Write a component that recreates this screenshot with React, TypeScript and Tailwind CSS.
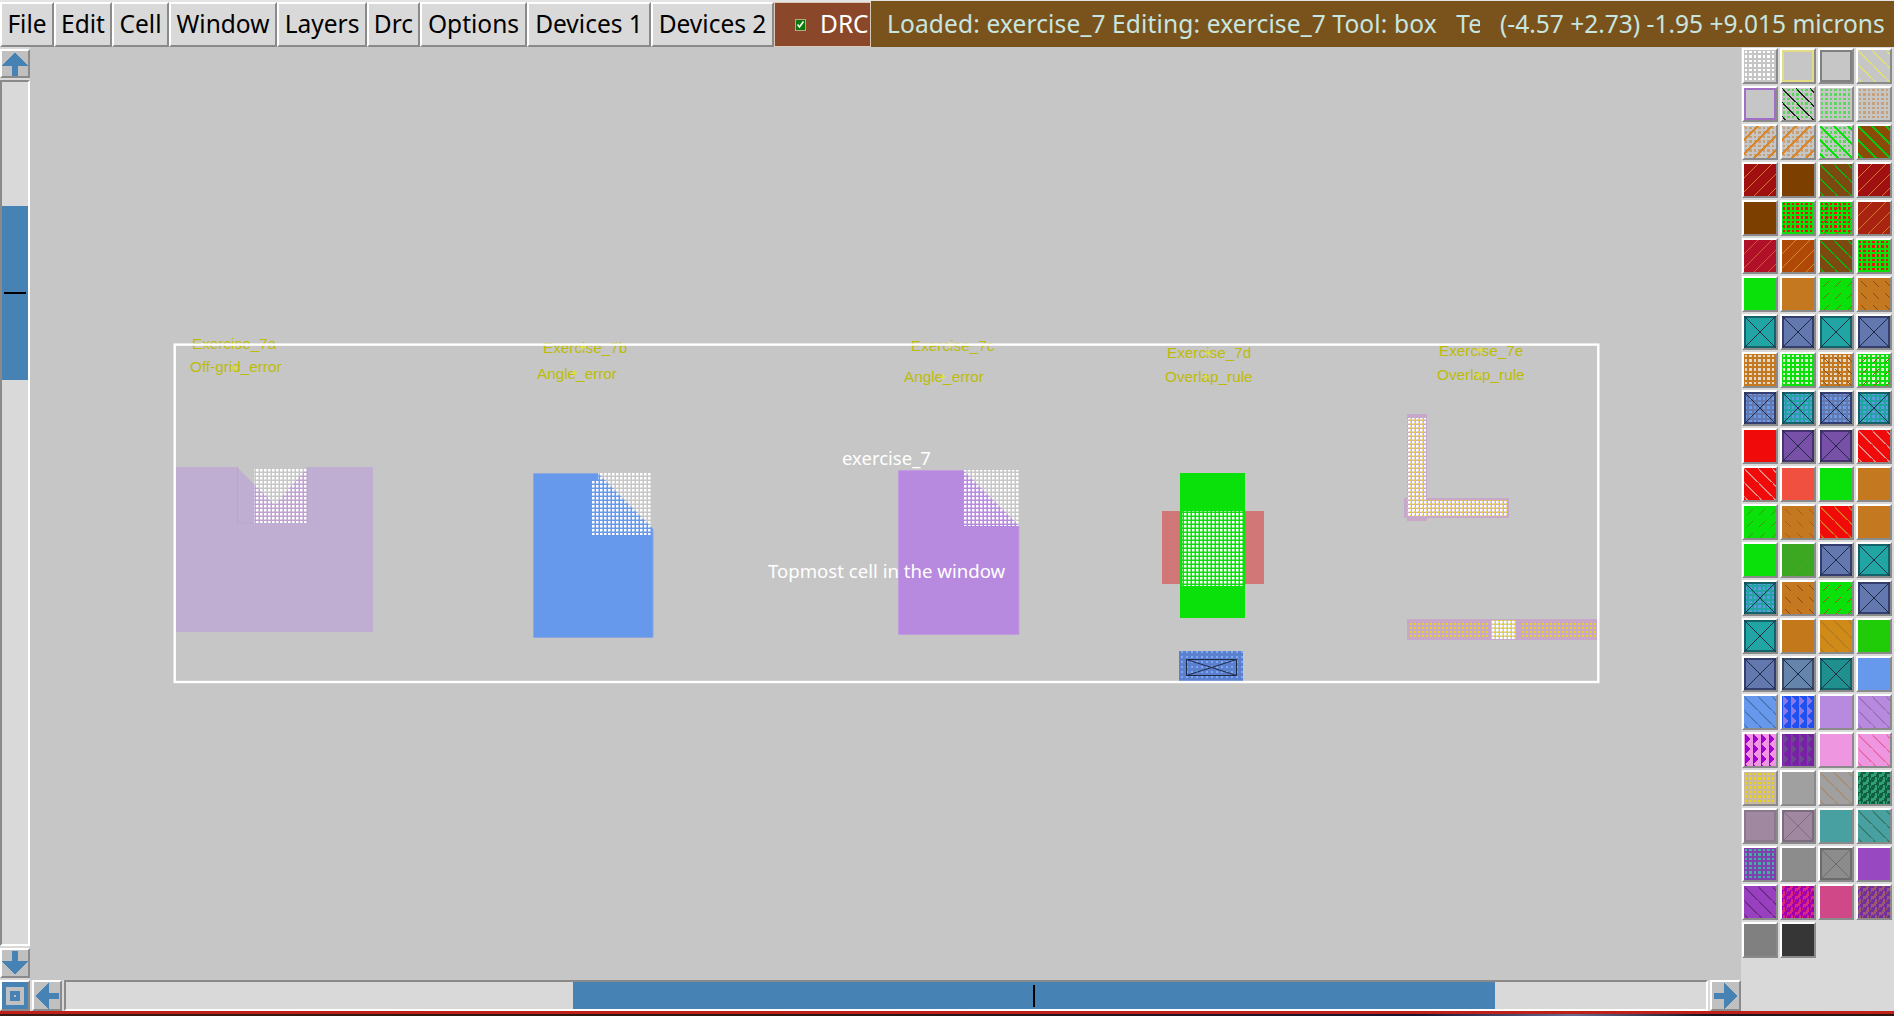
import { useId } from "react";

const menus: [string, string][] = [
  ["File", "w-[54px]"],
  ["Edit", "w-[58px]"],
  ["Cell", "w-[57px]"],
  ["Window", "w-[108px]"],
  ["Layers", "w-[90px]"],
  ["Drc", "w-[53px]"],
  ["Options", "w-[107px]"],
  ["Devices 1", "w-[124px]"],
  ["Devices 2", "w-[123px]"],
];

type Layer = [string, string, number?];
type TileSpec = { bg: string; l?: Layer[] };

const GRAY = "#c6c6c6";
const GREEN = "#0ae00a";
const ORANGE = "#c47820";
const BROWN = "#7c3f00";
const RED = "#f00a0a";
const TEAL = "#20a4a4";
const SLATE = "#6478b0";
const PURPLE = "#7850a8";
const BLUE = "#6699ec";
const LAV = "#b78ae0";
const PINK = "#ee96e0";

const tealX: TileSpec = { bg: TEAL, l: [["x", "#14626a"]] };
const slateX: TileSpec = { bg: SLATE, l: [["x", "#343f70"]] };
const purpleX: TileSpec = { bg: PURPLE, l: [["x", "#46326e"]] };
const slateDots: TileSpec = { bg: SLATE, l: [["dots", "#6a9ae8"], ["x", "#343f70"]] };
const tealDots: TileSpec = { bg: TEAL, l: [["dots", "#5f9ae0"], ["x", "#14626a"]] };

const tiles: TileSpec[] = [
  { bg: GRAY, l: [["dots", "#ffffff"]] },
  { bg: GRAY, l: [["frame", "#e4dc84"]] },
  { bg: GRAY, l: [["frame", "#808080"]] },
  { bg: GRAY, l: [["back", "#e4e070"]] },

  { bg: GRAY, l: [["frame", "#a070c8"]] },
  { bg: GRAY, l: [["dots", "#58d858"], ["back", "#202020"]] },
  { bg: GRAY, l: [["dots", "#58d858"]] },
  { bg: GRAY, l: [["dots", "#c8a078"]] },

  { bg: GRAY, l: [["dots", "#c8a078"], ["fwd", "#d8862a", 2]] },
  { bg: GRAY, l: [["dots", "#c8a078"], ["fwd", "#d8862a", 2]] },
  { bg: GRAY, l: [["dots", "#58d858"], ["back", "#0adf0a", 2]] },
  { bg: "#8b4a08", l: [["back", "#12c012", 2]] },

  { bg: "#a01010", l: [["fwd", "#d0782c"]] },
  { bg: BROWN },
  { bg: "#7c4a10", l: [["back", "#12b012"]] },
  { bg: "#a01010", l: [["fwd", "#d0782c"]] },

  { bg: BROWN },
  { bg: GREEN, l: [["dots", "#f01010"]] },
  { bg: GREEN, l: [["dots", "#f01010"], ["dash", "#8a4a10"]] },
  { bg: "#a82410", l: [["fwd", "#d0782c"]] },

  { bg: "#b01028", l: [["fwd", "#d05838"]] },
  { bg: "#b04808", l: [["fwd", "#d8882c"]] },
  { bg: "#7c4a10", l: [["back", "#12b012"]] },
  { bg: GREEN, l: [["dots", "#f01010"]] },

  { bg: GREEN },
  { bg: ORANGE },
  { bg: GREEN, l: [["dash", "#5e7a10"]] },
  { bg: ORANGE, l: [["dashb", "#8a4a10"]] },

  tealX,
  slateX,
  tealX,
  slateX,

  { bg: ORANGE, l: [["dots", "#e0d8c8"]] },
  { bg: GREEN, l: [["dots", "#e0f0d0"]] },
  { bg: ORANGE, l: [["dots", "#e0d8c8"], ["dashb", "#8a4a10"]] },
  { bg: GREEN, l: [["dots", "#e0f0d0"], ["dash", "#9a4a20"]] },

  slateDots,
  tealDots,
  slateDots,
  tealDots,

  { bg: RED },
  purpleX,
  purpleX,
  { bg: RED, l: [["back", "#e08a8a"]] },

  { bg: RED, l: [["back", "#e08a8a"]] },
  { bg: "#f05040" },
  { bg: GREEN },
  { bg: ORANGE },

  { bg: GREEN, l: [["dash", "#3a9a10"]] },
  { bg: ORANGE, l: [["dashb", "#a85c18"]] },
  { bg: RED, l: [["back", "#d8701c"]] },
  { bg: ORANGE },

  { bg: GREEN },
  { bg: "#3aa820", l: [["fwd", "#50a030"]] },
  slateX,
  tealX,

  tealDots,
  { bg: ORANGE, l: [["dashb", "#8a4a10"]] },
  { bg: GREEN, l: [["dash", "#9a4a20"]] },
  slateX,

  tealX,
  { bg: "#c4781c" },
  { bg: "#d08a18", l: [["back", "#b87c20"]] },
  { bg: "#20cc08" },

  slateX,
  { bg: "#6484ac", l: [["x", "#3a4a68"]] },
  { bg: "#20908f", l: [["x", "#14626a"]] },
  { bg: BLUE },

  { bg: BLUE, l: [["back", "#4c78b8"]] },
  { bg: "#2050f0", l: [["tri", "#8a78e8"]] },
  { bg: LAV },
  { bg: LAV, l: [["back", "#a070b8"]] },

  { bg: PINK, l: [["tri", "#a000d0"]] },
  { bg: "#7a20a8", l: [["tri", "#6a4a8c"]] },
  { bg: PINK },
  { bg: PINK, l: [["back", "#e86aa8"]] },

  { bg: "#c8b8a0", l: [["dots", "#e8d020"]] },
  { bg: "#a0a0a0" },
  { bg: "#a0a0a0", l: [["back", "#a88c70"]] },
  { bg: "#106040", l: [["maze", "#30a078"]] },

  { bg: "#a088a0", l: [["frame", "#8c788c"]] },
  { bg: "#a088a0", l: [["x", "#7c6c80"]] },
  { bg: "#48a0a0" },
  { bg: "#48a0a0", l: [["back", "#387c70"]] },

  { bg: "#8040b0", l: [["dots", "#40b0a0"]] },
  { bg: "#8c8c8c" },
  { bg: "#8c8c8c", l: [["x", "#6c6c6c"]] },
  { bg: "#9848c0" },

  { bg: "#9840c0", l: [["back", "#6c2c88"]] },
  { bg: "#a000b0", l: [["maze", "#d82880"]] },
  { bg: "#d04888" },
  { bg: "#7030a0", l: [["maze", "#a05870"]] },

  { bg: "#808080" },
  { bg: "#363636" },
];

function PatternBody({ kind, color, w = 1.4 }: { kind: string; color: string; w?: number }) {
  switch (kind) {
    case "dots":
      return <path d="M1 1h2v2h-2zM5 1h3v2h-3zM1 5h2v3h-2zM5 5h3v3h-3z" fill={color} />;
    case "back":
      return <path d="M-1 -1L15 15M13 -1L15 1M-1 13L1 15" stroke={color} strokeWidth={w} />;
    case "fwd":
      return <path d="M-1 15L15 -1M-1 1L1 -1M13 15L15 13" stroke={color} strokeWidth={w} />;
    case "dash":
      return <path d="M3 9L9 3" stroke={color} strokeWidth="1.2" />;
    case "dashb":
      return <path d="M3 3L9 9" stroke={color} strokeWidth="1.2" />;
    case "tri":
      return <path d="M1 0L6 5L1 10Z" fill={color} />;
    default:
      return <path d="M0 0h3v2h-1v2h-2zM5 2h3v3h-2v1h-1zM1 5h2v3h-2zM4 6h1v2h-1z" fill={color} />;
  }
}

const patternSize: Record<string, number> = { dots: 9, back: 14, fwd: 14, dash: 12, dashb: 12, tri: 8, maze: 8 };

function Tile({ spec }: { spec: TileSpec }) {
  const id = useId();
  return (
    <div className="w-[36px] h-[36px] border-2 border-t-white border-l-white border-r-[#8a8a8a] border-b-[#8a8a8a]">
      <svg width="32" height="32" viewBox="0 0 32 32" className="block" shapeRendering="crispEdges">
        <rect width="32" height="32" fill={spec.bg} />
        {spec.l?.map(([kind, color, w], i) => {
          if (kind === "frame") {
            return <rect key={i} x="1" y="1" width="30" height="30" fill="none" stroke={color} strokeWidth="2" />;
          }
          if (kind === "x") {
            return (
              <g key={i} fill="none">
                <rect x="1" y="1" width="30" height="30" strokeWidth="2" stroke={color} />
                <path d="M0 0L32 32M32 0L0 32" strokeWidth="1.2" stroke={color === "#7c6c80" || color === "#6c6c6c" ? color : "#1c2a44"} />
              </g>
            );
          }
          const s = patternSize[kind];
          return (
            <g key={i}>
              <defs>
                <pattern id={`${id}-${i}`} width={s} height={kind === "tri" ? 10 : s} patternUnits="userSpaceOnUse">
                  <PatternBody kind={kind} color={color} w={w} />
                </pattern>
              </defs>
              <rect width="32" height="32" fill={`url(#${id}-${i})`} />
            </g>
          );
        })}
      </svg>
    </div>
  );
}

function ArrowBtn({ dir, className }: { dir: "up" | "down" | "left" | "right"; className: string }) {
  const rot = { up: "", down: "rotate(180 13 13)", left: "rotate(270 13 13)", right: "rotate(90 13 13)" }[dir];
  return (
    <div className={`flex items-center justify-center bg-[#c0c0c0] border-2 border-t-white border-l-white border-r-[#8a8a8a] border-b-[#8a8a8a] ${className}`}>
      <svg width="26" height="26" viewBox="0 0 26 26" shapeRendering="crispEdges">
        <g transform={rot} fill="#4682b4">
          <path d="M13 1L26 15H0Z" />
          <rect x="10" y="14" width="6" height="11" />
        </g>
      </svg>
    </div>
  );
}

function Label({ x, y, t, cx, cy }: { x: number; y: number; t: string; cx: number; cy: number }) {
  return (
    <g>
      <text x={x} y={y} fill="#bcbc06" fontSize="15.3" fontFamily="'Liberation Sans', Arial, sans-serif">
        {t}
      </text>
      <path d={`M${cx - 3} ${cy}h6M${cx} ${cy - 3}v6`} stroke="#e8e830" strokeWidth="1" />
    </g>
  );
}

function LayoutView() {
  return (
    <svg width="1711" height="933" viewBox="30 47 1711 933" className="block">
      <defs>
        <pattern id="whiteDots" width="4" height="4" patternUnits="userSpaceOnUse">
          <rect x="0" y="1" width="2.5" height="2.5" fill="#ffffff" />
        </pattern>
        <pattern id="yellowDots" width="4" height="4" patternUnits="userSpaceOnUse">
          <rect x="2" y="3" width="2" height="2" fill="#e8d020" />
          <rect x="2" y="-1" width="2" height="2" fill="#e8d020" />
        </pattern>
        <pattern id="blueDots" width="5" height="5" patternUnits="userSpaceOnUse">
          <rect x="1" y="1" width="2" height="2" fill="#7ea8f0" />
        </pattern>
      </defs>

      <Label x={192} y={349} t="Exercise_7a" cx={234} cy={345} />
      <Label x={190} y={372} t="Off-grid_error" cx={234} cy={368} />
      <Label x={543} y={353} t="Exercise_7b" cx={583} cy={347} />
      <Label x={537} y={379} t="Angle_error" cx={574} cy={373} />
      <Label x={911} y={351} t="Exercise_7c" cx={951} cy={345} />
      <Label x={904} y={382} t="Angle_error" cx={943} cy={377} />
      <Label x={1167} y={358} t="Exercise_7d" cx={1208} cy={353} />
      <Label x={1165} y={382} t="Overlap_rule" cx={1206} cy={377} />
      <Label x={1439} y={356} t="Exercise_7e" cx={1480} cy={350} />
      <Label x={1437} y={380} t="Overlap_rule" cx={1479} cy={375} />

      {/* exercise a */}
      <path d="M176 467H237L275 505L308 467H373V632H176Z" fill="#c0aed2" />
      <path d="M237.5 467V523H254" fill="none" stroke="#b9a5cc" strokeWidth="1" />
      <path d="M254 484L275 505L308 467V523H254Z" fill="#bfa2d2" />
      <rect x="254" y="469" width="54" height="54" fill="url(#whiteDots)" />

      {/* exercise b */}
      <path d="M533.5 473.5H598L653 529V637.5H533.5Z" fill={BLUE} stroke="#8aa8dc" strokeWidth="1" />
      <rect x="598" y="473" width="54" height="62" fill="url(#whiteDots)" />
      <rect x="591" y="481" width="7" height="54" fill="url(#whiteDots)" />

      {/* exercise c */}
      <path d="M898.5 470.5H963L1019 526V634.5H898.5Z" fill={LAV} stroke="#c09ee0" strokeWidth="1" />
      <rect x="963" y="470" width="56" height="56" fill="url(#whiteDots)" />

      {/* exercise d */}
      <rect x="1162" y="511" width="102" height="73" fill="#d27777" />
      <rect x="1180" y="473" width="65" height="145" fill={GREEN} />
      <rect x="1182" y="511" width="62" height="75" fill="url(#whiteDots)" />
      <rect x="1179" y="651" width="64" height="30" fill="#5b80d0" />
      <rect x="1179" y="651" width="64" height="30" fill="url(#blueDots)" />
      <path d="M1186.5 659.5H1236.5V675.5H1186.5ZM1186.5 659.5L1236.5 675.5M1236.5 659.5L1186.5 675.5" fill="none" stroke="#1f2a44" strokeWidth="1" />

      {/* exercise e */}
      <path d="M1407 414H1427V498H1509V518H1427V521H1407V518H1404V498H1407Z" fill="#c8a8c8" />
      <rect x="1407" y="418" width="19" height="98" fill="url(#yellowDots)" />
      <rect x="1407" y="418" width="19" height="98" fill="url(#whiteDots)" />
      <rect x="1407" y="500" width="100" height="16" fill="url(#yellowDots)" />
      <rect x="1407" y="500" width="100" height="16" fill="url(#whiteDots)" />
      <rect x="1407" y="619" width="190" height="21" fill="#c8a8c8" />
      <rect x="1410" y="621" width="78" height="16" fill="url(#yellowDots)" />
      <rect x="1520" y="621" width="76" height="16" fill="url(#yellowDots)" />
      <rect x="1491" y="620" width="25" height="19" fill={GRAY} />
      <rect x="1491" y="620" width="25" height="19" fill="url(#yellowDots)" />
      <rect x="1491" y="620" width="25" height="19" fill="url(#whiteDots)" />

      <rect x="174.7" y="344.6" width="1423.6" height="337.4" fill="none" stroke="#ffffff" strokeWidth="2.4" />

      <text x="842" y="465" fill="#ffffff" fontSize="18.5" fontFamily="'Noto Sans', sans-serif">exercise_7</text>
      <text x="768" y="578" fill="#ffffff" fontSize="18.6" fontFamily="'Noto Sans', sans-serif">Topmost cell in the window</text>
    </svg>
  );
}

export default function App() {
  return (
    <div className="w-[1894px] h-[1016px] flex flex-col overflow-hidden bg-[#d9d9d9] font-['Noto_Sans',sans-serif] text-[24.5px]">
      {/* menu + status */}
      <div className="flex h-[47px] pt-[1px] bg-[#e4e4e4] shrink-0">
        {menus.map(([name, w]) => (
          <div
            key={name}
            className={`${w} mt-[1px] flex items-center justify-center bg-[#d9d9d9] text-black border-2 border-t-white border-l-white border-r-[#8a8a8a] border-b-[#8a8a8a]`}
          >
            {name}
          </div>
        ))}
        <div className="w-[97px] mt-[1px] flex items-center bg-[#8b472a] text-white border border-[#d9c9b9]">
          <span className="ml-[20px] w-[11px] h-[12px] flex items-center justify-center bg-[#0a7a0a] border border-[#b9a58a]">
            <svg width="9" height="9" viewBox="0 0 9 9"><path d="M1.5 4.5L3.5 7L7.5 1.5" fill="none" stroke="#ffffff" strokeWidth="1.6" /></svg>
          </span>
          <span className="ml-[14px]">DRC</span>
        </div>
        <div className="flex-1 flex items-center bg-[#7a521c] text-[#c8e6e0] whitespace-pre">
          <div className="ml-[16px] w-[593px] overflow-hidden tracking-[0.14px]">Loaded: exercise_7 Editing: exercise_7 Tool: box   Technology: sky130A</div>
          <div className="ml-[20px]">(-4.57 +2.73) -1.95 +9.015 microns</div>
        </div>
      </div>

      <div className="flex flex-1 min-h-0">
        <div className="w-[1741px] flex flex-col">
          <div className="flex flex-1 min-h-0">
            {/* vertical scrollbar */}
            <div className="w-[30px] flex flex-col py-[2px] gap-[2px] bg-[#d9d9d9]">
              <ArrowBtn dir="up" className="h-[29px] w-[30px]" />
              <div className="flex-1 flex flex-col bg-[#d9d9d9] border-2 border-t-[#8a8a8a] border-l-[#8a8a8a] border-r-white border-b-white">
                <div className="h-[124px]" />
                <div className="h-[174px] flex items-center justify-center bg-[#4682b4]">
                  <div className="w-[22px] h-[2px] bg-black" />
                </div>
              </div>
              <ArrowBtn dir="down" className="h-[30px] w-[30px]" />
            </div>
            <div className="flex-1 bg-[#c6c6c6] overflow-hidden">
              <LayoutView />
            </div>
          </div>

          {/* horizontal scrollbar */}
          <div className="h-[31px] flex gap-[2px] bg-[#d9d9d9] shrink-0">
            <div className="w-[30px] flex items-center justify-center bg-[#4682b4] border-2 border-t-white border-l-white border-r-[#8a8a8a] border-b-[#8a8a8a]">
              <div className="w-[18px] h-[18px] flex items-center justify-center bg-[#c0c0c0]">
                <div className="w-[10px] h-[10px] flex items-center justify-center bg-[#4682b4]">
                  <div className="w-[2px] h-[2px] bg-[#c0c0c0]" />
                </div>
              </div>
            </div>
            <ArrowBtn dir="left" className="w-[30px]" />
            <div className="w-[1644px] flex bg-[#d9d9d9] border-2 border-t-[#8a8a8a] border-l-[#8a8a8a] border-r-white border-b-white">
              <div className="w-[507px]" />
              <div className="w-[922px] flex items-center justify-center bg-[#4682b4]">
                <div className="w-[2px] h-[22px] bg-black" />
              </div>
            </div>
            <ArrowBtn dir="right" className="w-[31px]" />
          </div>
        </div>

        {/* layer palette */}
        <div className="w-[153px] pl-[1px] pt-[1px] bg-[#d9d9d9]">
          <div className="grid grid-cols-[repeat(4,36px)] gap-[2px]">
            {tiles.map((t, i) => (
              <Tile key={i} spec={t} />
            ))}
          </div>
        </div>
      </div>

      {/* desktop peeking out below the window */}
      <div className="h-[3px] bg-[#c0201a] shrink-0" />
      <div className="h-[2px] shrink-0 bg-[linear-gradient(90deg,#3a1a14_0%,#2a1810_40%,#1a1430_75%,#6a6a90_83%,#1a1420_90%,#2a1810_100%)]" />
    </div>
  );
}
